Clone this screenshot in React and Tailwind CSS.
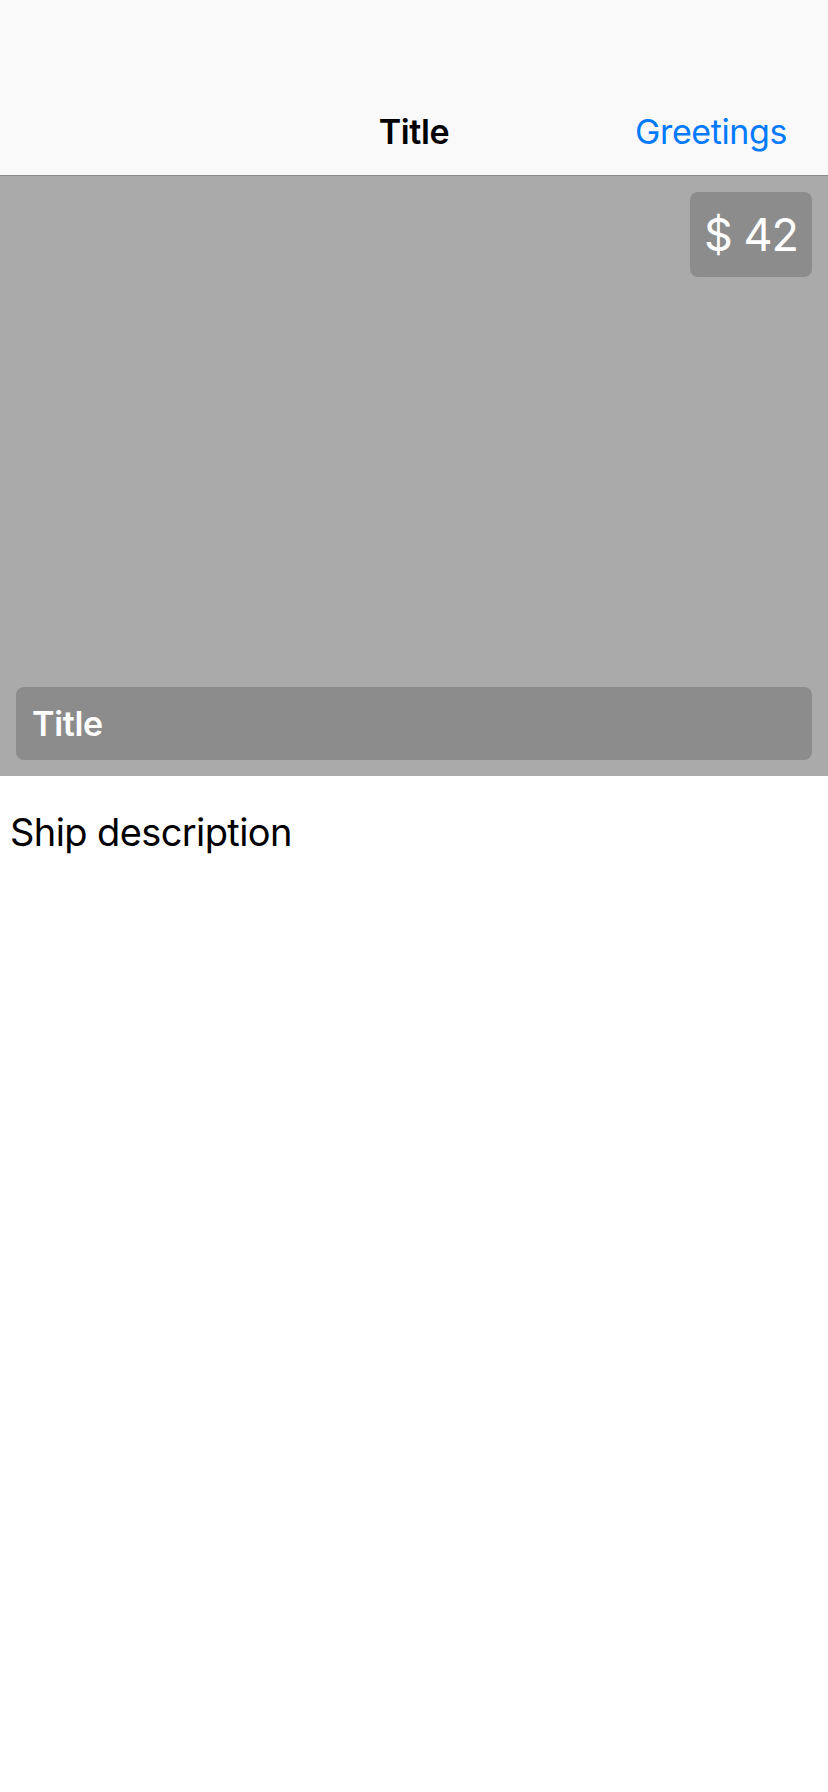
export default function App() {
  return (
    <div className="min-h-screen bg-white" style={{ fontFamily: 'Inter, "Noto Sans", sans-serif' }}>
      {/* nav bar */}
      <div className="bg-[#f9f9f9] border-b border-[#8a8a8a] pt-[88px]">
        <div className="grid grid-cols-3 items-center h-[87px] px-[41px]">
          <div />
          <div className="justify-self-center text-[34px] font-semibold text-black tracking-[-0.4px]">Title</div>
          <div className="justify-self-end text-[34px] text-[#007aff] tracking-[-0.4px]">Greetings</div>
        </div>
      </div>

      {/* image area */}
      <div className="h-[600px] bg-[#aaaaaa] flex flex-col justify-between p-4">
        <div className="self-end h-[85px] w-[122px] rounded-lg bg-[#8c8c8c] flex items-center justify-center">
          <span className="text-[45px] text-white leading-none tracking-[-1px]">$ 42</span>
        </div>
        <div className="h-[73px] rounded-lg bg-[#8c8c8c] flex items-center px-4">
          <span className="text-[34px] font-semibold text-white tracking-[-0.3px]">Title</span>
        </div>
      </div>

      {/* description */}
      <div className="pt-[32px] px-[10px]">
        <p className="text-[38px] leading-[48px] text-black tracking-[-0.6px]">Ship description</p>
      </div>
    </div>
  );
}
